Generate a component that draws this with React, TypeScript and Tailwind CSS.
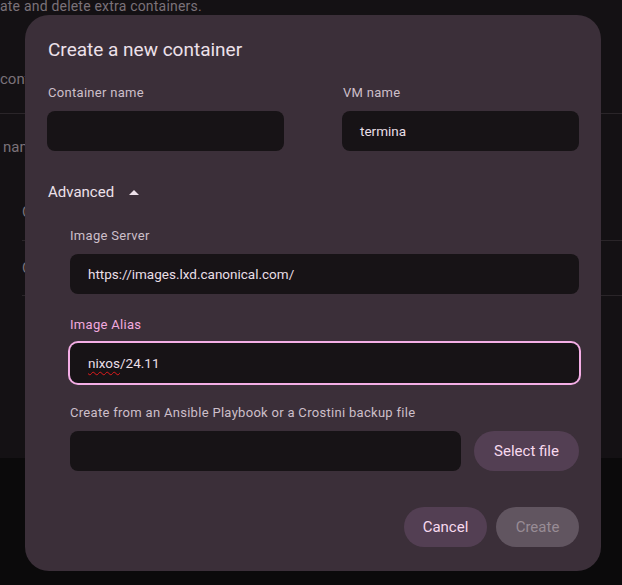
import { ReactNode } from 'react';

const font = { fontFamily: 'Roboto, "Noto Sans", sans-serif' };

function Label({ children, active }: { children: ReactNode; active?: boolean }) {
  return (
    <div
      className={`text-[13px] leading-[16px] tracking-[0.3px] ${
        active ? 'text-[#f1a9df]' : 'text-[#cdbfc9]'
      }`}
    >
      {children}
    </div>
  );
}

function Field({ children, focused }: { children?: ReactNode; focused?: boolean }) {
  return (
    <div
      className={`h-[40px] rounded-[8px] bg-[#171316] pl-[18px] flex items-center text-[13.5px] text-[#e9dfe6] ${
        focused ? 'ring-2 ring-[#f4aee6]' : ''
      }`}
    >
      {children}
    </div>
  );
}

function Background() {
  return (
    <div className="flex flex-col h-full">
      <div className="h-[458px] bg-[#141114] text-[#7b7279] overflow-hidden">
        <p className="-mt-[2px] text-[14px] leading-[16px] tracking-[0.2px]">
          ate and delete extra containers.
        </p>
        <p className="mt-[55px] text-[15px] leading-[20px]">containers</p>
        <div className="mt-[24px] h-px bg-[#2a2529]" />
        <div className="h-[71px] flex items-center pl-[3px] pb-[4px] text-[15px]">name</div>
        <div className="ml-[22px] flex flex-col">
          <div className="h-[55px] flex items-center text-[15px]">Container</div>
          <div className="h-px bg-[#2a2529]" />
          <div className="h-[54px] flex items-center text-[15px]">Container</div>
          <div className="h-px bg-[#2a2529]" />
        </div>
      </div>
      <div className="flex-1 bg-[#0b0a0b]" />
    </div>
  );
}

export default function App() {
  return (
    <div className="relative w-[622px] h-[585px] overflow-hidden bg-[#0b0a0b]" style={font}>
      <Background />

      <div className="absolute left-[25px] top-[15px] w-[576px] h-[556px] rounded-[24px] bg-[#3b2f39] px-[22px] pt-[22px] flex flex-col">
        <h2 className="pl-px text-[19px] leading-[25px] text-[#ede1ea]">Create a new container</h2>

        <div className="mt-[23px] grid grid-cols-2 gap-x-[58px]">
          <div className="flex flex-col gap-[10px]">
            <div className="pl-px"><Label>Container name</Label></div>
            <Field />
          </div>
          <div className="flex flex-col gap-[10px]">
            <div className="pl-px"><Label>VM name</Label></div>
            <Field>termina</Field>
          </div>
        </div>

        <div className="mt-[31px] flex items-center gap-[15px] pl-px text-[15px] leading-[20px] text-[#ede1ea]">
          <span>Advanced</span>
          <svg width="10" height="5" viewBox="0 0 10 5" className="mt-px">
            <path d="M0 5 L5 0 L10 5 Z" fill="#ede1ea" />
          </svg>
        </div>

        <div className="mt-[26px] pl-[23px] flex flex-col">
          <Label>Image Server</Label>
          <div className="mt-[10px]">
            <Field>https://images.lxd.canonical.com/</Field>
          </div>

          <div className="mt-[23px]">
            <Label active>Image Alias</Label>
          </div>
          <div className="mt-[10px]">
            <Field focused>
              <span className="underline decoration-wavy decoration-[#e01b1b] decoration-1 underline-offset-[3px]">
                nixos
              </span>
              <span>/24.11</span>
            </Field>
          </div>

          <div className="mt-[22px]">
            <Label>Create from an Ansible Playbook or a Crostini backup file</Label>
          </div>
          <div className="mt-[10px] flex gap-[13px]">
            <div className="flex-1">
              <Field />
            </div>
            <button className="w-[105px] h-[40px] rounded-full bg-[#533f53] text-[15px] text-[#f7d9ee]">
              Select file
            </button>
          </div>
        </div>

        <div className="mt-[36px] flex justify-end gap-[9px]">
          <button className="w-[83px] h-[40px] rounded-full bg-[#533f53] text-[15px] text-[#f7d9ee]">
            Cancel
          </button>
          <button className="w-[83px] h-[40px] rounded-full bg-[#615560] text-[15px] text-[#988c95]">
            Create
          </button>
        </div>
      </div>
    </div>
  );
}
